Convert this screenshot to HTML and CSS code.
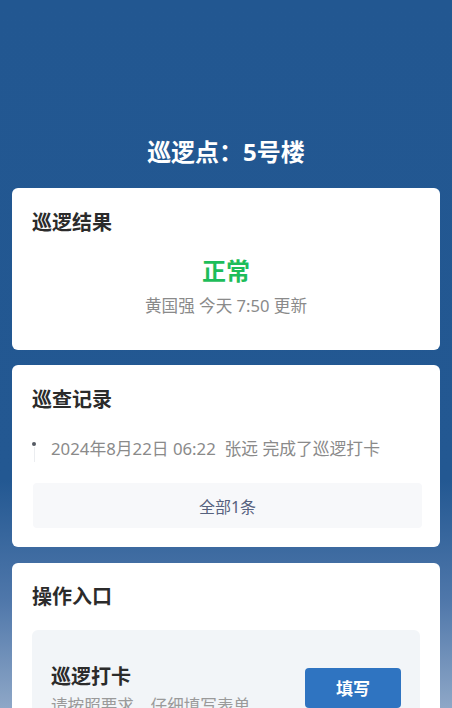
FILE: index.html
```html
<!DOCTYPE html>
<html lang="zh-CN">
<head>
<meta charset="utf-8">
<link rel="stylesheet" href="styles.css">
</head>
<body>
<div class="page">
  <header class="header">
    <h1 class="point-title">巡逻点：5号楼</h1>
  </header>

  <section class="card card-result">
    <h2 class="card-title">巡逻结果</h2>
    <div class="result">
      <div class="result-status">正常</div>
      <div class="result-meta">黄国强 今天 7:50 更新</div>
    </div>
  </section>

  <section class="card card-records">
    <h2 class="card-title">巡查记录</h2>
    <ul class="timeline">
      <li class="timeline-item">
        <span class="timeline-axis"><span class="timeline-dot"></span><span class="timeline-line"></span></span>
        <span class="timeline-text">2024年8月22日 06:22&nbsp; 张远 完成了巡逻打卡</span>
      </li>
    </ul>
    <div class="all-btn">全部1条</div>
  </section>

  <section class="card card-actions">
    <h2 class="card-title">操作入口</h2>
    <div class="action">
      <div class="action-info">
        <div class="action-name">巡逻打卡</div>
        <div class="action-desc">请按照要求，仔细填写表单</div>
      </div>
      <button class="action-btn">填写</button>
    </div>
  </section>
</div>
</body>
</html>
```

FILE: styles.css
```css
* { box-sizing: border-box; }

html, body {
  margin: 0;
  padding: 0;
}

body {
  font-family: "Noto Sans", "Noto Sans CJK SC", sans-serif;
  background: linear-gradient(to bottom, #225791 0px, #235892 480px, #4f77aa 600px, #8ea7c7 708px);
  height: 708px;
  overflow: hidden;
}

.page {
  padding: 0 12px;
  display: flex;
  flex-direction: column;
}

.header {
  padding-top: 136px;
  padding-bottom: 20px;
  text-align: center;
}

.point-title {
  margin: 0;
  font-size: 24px;
  line-height: 32px;
  font-weight: 700;
  color: #ffffff;
}

.card {
  background: #ffffff;
  border-radius: 6px;
  padding: 21px 20px 31px;
  margin-bottom: 15px;
}

.card-result {
  padding-bottom: 32px;
}

.card-title {
  margin: 0;
  font-size: 20px;
  line-height: 28px;
  font-weight: 700;
  color: #2b2b2b;
}

.result {
  display: flex;
  flex-direction: column;
  align-items: center;
  margin-top: 18px;
}

.result-status {
  font-size: 24px;
  line-height: 32px;
  font-weight: 700;
  color: #1dbd5a;
}

.result-meta {
  margin-top: 7px;
  font-size: 16.6px;
  line-height: 24px;
  color: #8a8a8a;
}

.card-records {
  padding-bottom: 19px;
}

.timeline {
  list-style: none;
  margin: 23px 0 0;
  padding: 0;
}

.timeline-item {
  display: flex;
  align-items: flex-start;
}

.timeline-axis {
  width: 19px;
  height: 24px;
  flex: none;
  display: flex;
  flex-direction: column;
  align-items: flex-start;
  padding-top: 5px;
}

.timeline-dot {
  width: 4px;
  height: 4px;
  border-radius: 50%;
  background: #555a63;
  flex: none;
}

.timeline-line {
  width: 1px;
  height: 15px;
  margin-left: 1.5px;
  margin-top: 1px;
  background: #ebedf0;
  flex: none;
}

.timeline-text {
  font-size: 16.8px;
  line-height: 24px;
  color: #8a8a8a;
  white-space: nowrap;
}

.all-btn {
  margin: 22px -2px 0 1px;
  height: 45px;
  border-radius: 4px;
  background: #f7f8fa;
  display: flex;
  align-items: center;
  justify-content: center;
  font-size: 16px;
  color: #56627e;
}

.card-actions {
  margin-top: 1px;
  padding-top: 20px;
}

.action {
  margin-top: 19px;
  background: #f2f5f8;
  border-radius: 6px;
  padding: 33px 19px 24px;
  display: flex;
  align-items: center;
  justify-content: space-between;
}

.action-name {
  font-size: 20px;
  line-height: 28px;
  font-weight: 700;
  color: #2b2b2b;
}

.action-desc {
  margin-top: 3px;
  font-size: 16.6px;
  line-height: 24px;
  color: #9a9a9a;
}

.action-btn {
  width: 96px;
  height: 40px;
  border: none;
  border-radius: 4px;
  background: #2f74c1;
  color: #ffffff;
  font-family: "Noto Sans", "Noto Sans CJK SC", sans-serif;
  font-size: 17px;
  font-weight: 700;
  margin-top: -6px;
}
```
